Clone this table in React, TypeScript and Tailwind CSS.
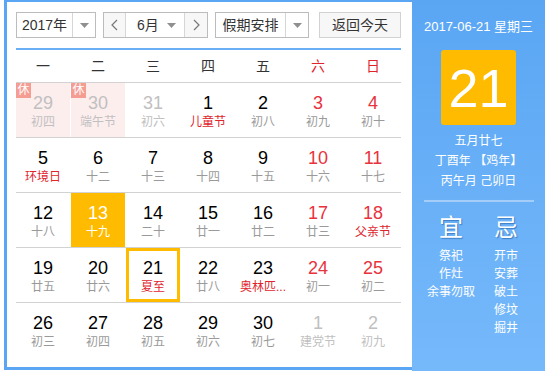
import React from "react";

type Day = {
  n: number;
  lunar: string;
  other?: boolean;
  weekend?: boolean;
  fest?: boolean;
  rest?: boolean;
  selected?: boolean;
  today?: boolean;
};

const weeks: Day[][] = [
  [
    { n: 29, lunar: "初四", other: true, rest: true },
    { n: 30, lunar: "端午节", other: true, rest: true },
    { n: 31, lunar: "初六", other: true },
    { n: 1, lunar: "儿童节", fest: true },
    { n: 2, lunar: "初八" },
    { n: 3, lunar: "初九", weekend: true },
    { n: 4, lunar: "初十", weekend: true },
  ],
  [
    { n: 5, lunar: "环境日", fest: true },
    { n: 6, lunar: "十二" },
    { n: 7, lunar: "十三" },
    { n: 8, lunar: "十四" },
    { n: 9, lunar: "十五" },
    { n: 10, lunar: "十六", weekend: true },
    { n: 11, lunar: "十七", weekend: true },
  ],
  [
    { n: 12, lunar: "十八" },
    { n: 13, lunar: "十九", selected: true },
    { n: 14, lunar: "二十" },
    { n: 15, lunar: "廿一" },
    { n: 16, lunar: "廿二" },
    { n: 17, lunar: "廿三", weekend: true },
    { n: 18, lunar: "父亲节", weekend: true, fest: true },
  ],
  [
    { n: 19, lunar: "廿五" },
    { n: 20, lunar: "廿六" },
    { n: 21, lunar: "夏至", fest: true, today: true },
    { n: 22, lunar: "廿八" },
    { n: 23, lunar: "奥林匹...", fest: true },
    { n: 24, lunar: "初一", weekend: true },
    { n: 25, lunar: "初二", weekend: true },
  ],
  [
    { n: 26, lunar: "初三" },
    { n: 27, lunar: "初四" },
    { n: 28, lunar: "初五" },
    { n: 29, lunar: "初六" },
    { n: 30, lunar: "初七" },
    { n: 1, lunar: "建党节", other: true, weekend: true },
    { n: 2, lunar: "初九", other: true, weekend: true },
  ],
];

const weekNames = ["一", "二", "三", "四", "五", "六", "日"];

const Caret = () => (
  <svg width="9" height="5" viewBox="0 0 9 5">
    <path d="M0 0 L9 0 L4.5 5 Z" fill="#8f8f8f" />
  </svg>
);

const Chevron = ({ dir }: { dir: "l" | "r" }) => (
  <svg width="7" height="12" viewBox="0 0 7 12">
    <polyline
      points={dir === "l" ? "6,1 1,6 6,11" : "1,1 6,6 1,11"}
      fill="none"
      stroke="#777"
      strokeWidth="1.2"
    />
  </svg>
);

const DayCell = ({ d }: { d: Day }) => {
  let bg = "bg-white";
  if (d.rest) bg = "bg-[#fdeeee]";
  if (d.selected) bg = "bg-[#ffbb00]";

  let numColor = "text-black";
  if (d.weekend) numColor = "text-[#e8323c]";
  if (d.other) numColor = "text-[#c0c0c0]";
  if (d.selected) numColor = "text-white";

  let lunarColor = "text-[#9a9a9a]";
  if (d.fest) lunarColor = "text-[#e0242c]";
  if (d.other) lunarColor = "text-[#c0c0c0]";
  if (d.selected) lunarColor = "text-white";

  return (
    <div
      className={`relative h-[54px] ${bg} ${
        d.today ? "border-[3px] border-[#ffbb00] pt-[6px]" : "pt-[9px]"
      } flex flex-col items-center`}
    >
      {d.rest && (
        <span className="absolute left-0 top-0 w-[15px] h-[15px] bg-[#f59c93] text-white text-[12px] leading-[15px] text-center">
          休
        </span>
      )}
      <span
        className={`text-[18px] leading-[22px] font-['Liberation_Sans',sans-serif] ${numColor}`}
      >
        {d.n}
      </span>
      <span className={`text-[12px] leading-[16px] whitespace-nowrap ${lunarColor}`}>
        {d.lunar}
      </span>
    </div>
  );
};

export default function App() {
  return (
    <div className="w-[545px] h-[371px] bg-white overflow-hidden flex font-['Liberation_Sans','Noto_Sans_CJK_SC',sans-serif]">
      {/* calendar */}
      <div className="ml-[4px] w-[408px] h-[370px] border-t-2 border-l-[3px] border-b-[3px] border-[#5aa6f4] pt-[10px] pl-[9px]">
        <div className="flex items-center h-[26px] text-[14px] text-[#333]">
          <div className="flex h-[26px] w-[80px] border border-[#bcbcbc]">
            <div className="w-[55px] flex items-center justify-center">2017年</div>
            <div className="flex-1 border-l border-[#d6d6d6] flex items-center justify-center">
              <Caret />
            </div>
          </div>
          <div className="ml-[7px] flex h-[26px] w-[105px] border border-[#bcbcbc]">
            <div className="w-[21px] bg-[#f7f7f7] flex items-center justify-center">
              <Chevron dir="l" />
            </div>
            <div className="w-[60px] border-x border-[#d6d6d6] flex items-center pl-[11px] pr-[8px] justify-between">
              <span>6月</span>
              <Caret />
            </div>
            <div className="flex-1 bg-[#f7f7f7] flex items-center justify-center">
              <Chevron dir="r" />
            </div>
          </div>
          <div className="ml-[7px] flex h-[26px] w-[94px] border border-[#bcbcbc]">
            <div className="w-[69px] flex items-center justify-center">假期安排</div>
            <div className="flex-1 border-l border-[#d6d6d6] flex items-center justify-center">
              <Caret />
            </div>
          </div>
          <div className="ml-[10px] h-[26px] w-[82px] border border-[#d2d2d2] bg-[#f7f7f7] flex items-center justify-center">
            返回今天
          </div>
        </div>

        <div className="mt-[10px] h-[2px] w-[385px] bg-[#6aaef6]" />

        <div className="grid grid-cols-[repeat(7,54px)] gap-x-px h-[32px] items-center text-[14px]">
          {weekNames.map((w, i) => (
            <div
              key={w}
              className={`text-center ${i >= 5 ? "text-[#e0242c]" : "text-[#333]"}`}
            >
              {w}
            </div>
          ))}
        </div>

        {weeks.map((row, ri) => (
          <div
            key={ri}
            className="w-[385px] border-t border-[#d2d2d2] grid grid-cols-[repeat(7,54px)] gap-x-px"
          >
            {row.map((d, ci) => (
              <DayCell key={ci} d={d} />
            ))}
          </div>
        ))}
      </div>

      {/* side panel */}
      <div className="w-[133px] h-[371px] bg-gradient-to-b from-[#5aa6f3] to-[#76b9fb] flex flex-col items-center text-white">
        <div className="pt-[18px] text-[13px] leading-[18px] whitespace-nowrap">
          2017-06-21 星期三
        </div>
        <div className="mt-[14px] w-[75px] h-[75px] rounded-[3px] bg-[#ffbb00] flex items-center justify-center text-[54px] leading-none font-['Liberation_Sans',sans-serif]">
          21
        </div>
        <div className="mt-[6px] text-[12px] leading-[20px] text-center whitespace-nowrap">
          <div>五月廿七</div>
          <div>丁酉年 【鸡年】</div>
          <div>丙午月 己卯日</div>
        </div>
        <div className="mt-[9px] h-[2px] w-[110px] bg-[#a4cdf9]" />
        <div className="mt-[12px] flex">
          <div className="w-[55px] flex flex-col items-center">
            <div className="text-[24px] leading-[28px] [text-shadow:1px_1px_1px_#3d7cc4]">宜</div>
            <div className="mt-[5px] text-[12px] leading-[18px] text-center whitespace-nowrap">
              <div>祭祀</div>
              <div>作灶</div>
              <div>余事勿取</div>
            </div>
          </div>
          <div className="w-[55px] flex flex-col items-center">
            <div className="text-[24px] leading-[28px] [text-shadow:1px_1px_1px_#3d7cc4]">忌</div>
            <div className="mt-[5px] text-[12px] leading-[18px] text-center whitespace-nowrap">
              <div>开市</div>
              <div>安葬</div>
              <div>破土</div>
              <div>修坟</div>
              <div>掘井</div>
            </div>
          </div>
        </div>
      </div>
    </div>
  );
}
